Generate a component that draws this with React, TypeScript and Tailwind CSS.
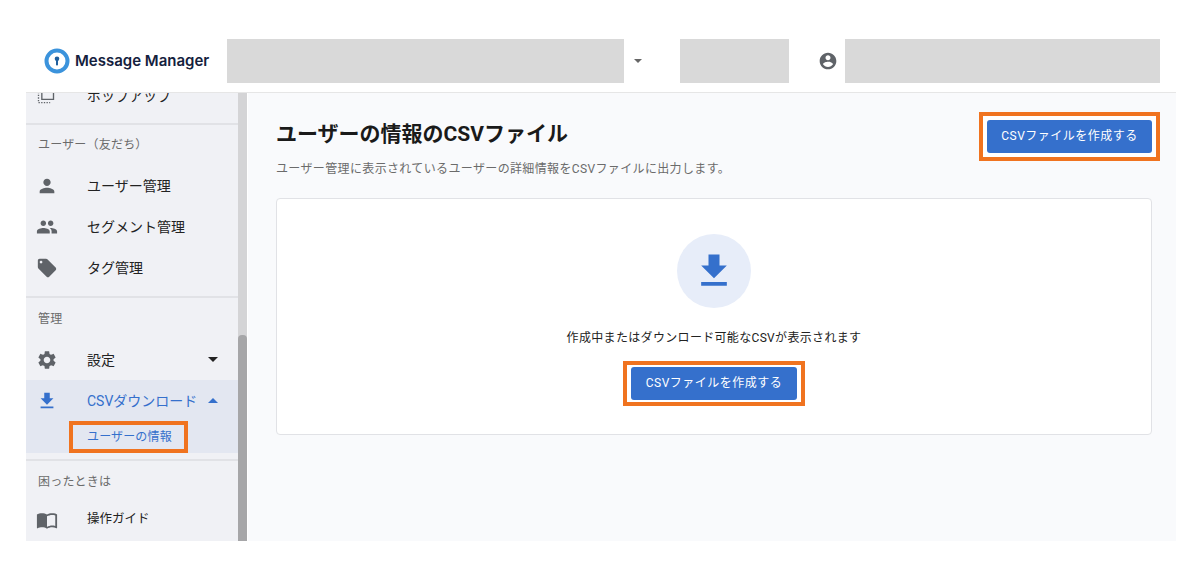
import React from "react";

const FONT = { fontFamily: '"Roboto", "Noto Sans CJK JP", sans-serif' };

const P = {
  person: "M12 12c2.21 0 4-1.79 4-4s-1.79-4-4-4-4 1.79-4 4 1.79 4 4 4zm0 2c-2.67 0-8 1.34-8 4v2h16v-2c0-2.66-5.33-4-8-4z",
  people: "M16 11c1.66 0 2.99-1.34 2.99-3S17.66 5 16 5c-1.66 0-3 1.34-3 3s1.34 3 3 3zm-8 0c1.66 0 2.99-1.34 2.99-3S9.66 5 8 5C6.34 5 5 6.34 5 8s1.34 3 3 3zm0 2c-2.33 0-7 1.17-7 3.5V19h14v-2.5c0-2.33-4.67-3.5-7-3.5zm8 0c-.29 0-.62.02-.97.05 1.16.84 1.97 1.97 1.97 3.45V19h6v-2.5c0-2.33-4.67-3.5-7-3.5z",
  tag: "M21.41 11.58l-9-9C12.05 2.22 11.55 2 11 2H4c-1.1 0-2 .9-2 2v7c0 .55.22 1.05.59 1.42l9 9c.36.36.86.58 1.41.58.55 0 1.05-.22 1.41-.59l7-7c.37-.36.59-.86.59-1.41 0-.55-.23-1.06-.59-1.42zM5.5 7C4.67 7 4 6.33 4 5.5S4.67 4 5.5 4 7 4.67 7 5.5 6.33 7 5.5 7z",
  gear: "M19.14 12.94c.04-.3.06-.61.06-.94 0-.32-.02-.64-.07-.94l2.03-1.58c.18-.14.23-.41.12-.61l-1.92-3.32c-.12-.22-.37-.29-.59-.22l-2.39.96c-.5-.38-1.03-.7-1.62-.94l-.36-2.54c-.04-.24-.24-.41-.48-.41h-3.84c-.24 0-.43.17-.47.41l-.36 2.54c-.59.24-1.13.57-1.62.94l-2.39-.96c-.22-.08-.47 0-.59.22L2.74 8.87c-.12.21-.08.47.12.61l2.03 1.58c-.05.3-.09.63-.09.94s.02.64.07.94l-2.03 1.58c-.18.14-.23.41-.12.61l1.92 3.32c.12.22.37.29.59.22l2.39-.96c.5.38 1.03.7 1.62.94l.36 2.54c.05.24.24.41.48.41h3.84c.24 0 .44-.17.47-.41l.36-2.54c.59-.24 1.13-.56 1.62-.94l2.39.96c.22.08.47 0 .59-.22l1.92-3.32c.12-.22.07-.47-.12-.61l-2.01-1.58zM12 15.6c-1.98 0-3.6-1.62-3.6-3.6s1.62-3.6 3.6-3.6 3.6 1.62 3.6 3.6-1.62 3.6-3.6 3.6z",
  download: "M19 9h-4V3H9v6H5l7 7 7-7zM5 18v2h14v-2H5z",
  account: "M12 2C6.48 2 2 6.48 2 12s4.48 10 10 10 10-4.48 10-10S17.52 2 12 2zm0 3c1.66 0 3 1.34 3 3s-1.34 3-3 3-3-1.34-3-3 1.34-3 3-3zm0 14.2c-2.5 0-4.71-1.28-6-3.22.03-1.99 4-3.08 6-3.08 1.99 0 5.97 1.09 6 3.08-1.29 1.94-3.5 3.22-6 3.22z",
  book: "M21 5c-1.11-.35-2.33-.5-3.5-.5-1.95 0-4.05.4-5.5 1.5-1.45-1.1-3.55-1.5-5.5-1.5S2.45 4.9 1 6v14.65c0 .25.25.5.5.5.1 0 .15-.05.25-.05C3.1 20.45 5.05 20 6.5 20c1.95 0 4.05.4 5.5 1.5 1.35-.85 3.8-1.5 5.5-1.5 1.65 0 3.35.3 4.75 1.05.1.05.15.05.25.05.25 0 .5-.25.5-.5V6c-.6-.45-1.25-.75-2-1zm0 13.5c-1.1-.35-2.3-.5-3.5-.5-1.7 0-4.15.65-5.5 1.5V8c1.35-.85 3.8-1.5 5.5-1.5 1.2 0 2.4.15 3.5.5v11.5z",
};

function Ico({ d, className }: { d: string; className: string }) {
  return (
    <svg viewBox="0 0 24 24" className={className} fill="currentColor">
      <path d={d} />
    </svg>
  );
}

function Caret({ up, className }: { up?: boolean; className: string }) {
  return (
    <svg viewBox="0 0 10 5" className={className} fill="currentColor">
      <path d={up ? "M0 5L5 0l5 5z" : "M0 0l5 5 5-5z"} />
    </svg>
  );
}

function Row({ icon, label, color = "text-[#222]", iconColor = "text-[#5f6368]", right, textClass = "text-[14px]", className = "" }: { icon: React.ReactNode; label: string; color?: string; iconColor?: string; right?: React.ReactNode; textClass?: string; className?: string }) {
  return (
    <div className={`flex h-[41px] items-center ${color} ${className}`}>
      <div className={`flex w-[61px] shrink-0 items-center pl-[10px] ${iconColor}`}>{icon}</div>
      <span className={`${textClass} leading-none`}>{label}</span>
      {right}
    </div>
  );
}

function Label({ text, className }: { text: string; className: string }) {
  return <div className={`flex h-[38px] items-center pl-[12px] text-[12px] leading-none tracking-[0.2px] text-[#6b6b6b] ${className}`}>{text}</div>;
}

function Divider({ className }: { className: string }) {
  return <div className={`h-[2px] bg-[#e1e2e6] ${className}`} />;
}

function CsvButton({ className }: { className: string }) {
  return (
    <div className={`h-[33px] rounded-[3px] bg-[#3570cc] text-center text-[12px] leading-[33px] tracking-[0.5px] text-white ${className}`}>
      CSVファイルを作成する
    </div>
  );
}

function Blurred({ className }: { className: string }) {
  return <div className={`h-[44px] bg-[#d9d9d9] blur-[0.6px] ${className}`} />;
}

export default function App() {
  return (
    <div className="h-[580px] w-[1202px] overflow-hidden bg-white px-[26px]" style={FONT}>
      <div className="flex h-[541px] w-[1150px] flex-col">
        <header className="flex h-[93px] shrink-0 items-end border-b border-[#e6e6e6] pb-[9px]">
          <div className="flex h-[44px] w-[201px] shrink-0 items-center pl-[18px]">
            <svg viewBox="0 0 26 26" className="h-[26px] w-[26px] shrink-0">
              <circle cx="13" cy="13" r="10.5" fill="#fff" stroke="#3b93dc" strokeWidth="4" />
              <circle cx="13" cy="10.8" r="2.3" fill="#1f5f9e" />
              <rect x="12" y="11" width="2" height="6.5" rx="0.8" fill="#1f5f9e" />
            </svg>
            <span className="ml-[5px] whitespace-nowrap text-[15px] font-semibold text-[#14213d]" style={{ fontFamily: '"Inter", sans-serif' }}>Message Manager</span>
          </div>
          <Blurred className="w-[397px] shrink-0" />
          <div className="flex h-[44px] w-[56px] shrink-0 items-center pl-[10px] text-[#666]">
            <Caret className="h-[4px] w-[8px]" />
          </div>
          <Blurred className="w-[109px] shrink-0" />
          <div className="flex h-[44px] w-[56px] shrink-0 items-center pl-[29px] text-[#5f6368]">
            <Ico d={P.account} className="h-[20px] w-[20px]" />
          </div>
          <Blurred className="w-[315px] shrink-0" />
        </header>
        <div className="flex min-h-0 flex-1">
          <aside className="w-[212px] shrink-0 overflow-hidden bg-[#f0f1f5]">
            <div className="-mt-[18px]">
              <Row
                label="ポップアップ"
                icon={
                  <svg viewBox="0 0 24 24" className="h-[20px] w-[20px]" fill="none" stroke="currentColor" strokeWidth="1.6">
                    <path d="M3 4v16h14" strokeDasharray="1.6 1.6" />
                    <path d="M7 4v12h14V4z" />
                  </svg>
                }
              />
              <Divider className="mt-[7px]" />
              <Label className="mb-[2px] pt-[2px]" text="ユーザー（友だち）" />
              <Row label="ユーザー管理" icon={<Ico d={P.person} className="h-[22px] w-[22px]" />} />
              <Row label="セグメント管理" icon={<Ico d={P.people} className="h-[22px] w-[22px]" />} />
              <Row label="タグ管理" icon={<Ico d={P.tag} className="h-[22px] w-[22px]" />} />
              <Divider className="mt-[8px]" />
              <Label className="mb-[3px] pt-[3px]" text="管理" />
              <Row
                label="設定"
                icon={<Ico d={P.gear} className="h-[22px] w-[22px]" />}
                right={<Caret className="ml-[93px] h-[5px] w-[10px] text-[#222]" />}
              />
              <div className="bg-[#e3e7f1]">
                <Row
                  label="CSVダウンロード"
                  color="text-[#3570cc]"
                  iconColor="text-[#3570cc]"
                  icon={<Ico d={P.download} className="h-[22px] w-[22px]" />}
                  right={<Caret up className="ml-[11px] h-[5px] w-[10px] text-[#3570cc]" />}
                />
                <div className="flex h-[32px] items-start pl-[43px]">
                  <div className="flex h-[32px] w-[119px] items-center border-[4px] border-[#f0731f] pl-[14px] text-[12px] leading-none tracking-[0.15px] text-[#3570cc]">
                    ユーザーの情報
                  </div>
                </div>
              </div>
              <Divider className="mt-[6px]" />
              <Label className="mb-[3px] pt-[4px]" text="困ったときは" />
              <Row className="-mt-[3px]" textClass="text-[12.5px]" label="操作ガイド" icon={<Ico d={P.book} className="h-[22px] w-[22px]" />} />
            </div>
          </aside>
          <div className="flex w-[9px] shrink-0 flex-col bg-[#d4d4d6] pt-[242px]">
            <div className="flex-1 rounded-t-[4px] bg-[#a6a6a8]" />
          </div>
          <div className="w-px shrink-0 bg-white" />
          <main className="min-w-0 flex-1 bg-[#f9fafc] pl-[28px] pr-[24px]">
            <div className="flex h-[105px] items-start justify-between pt-[19px]">
              <div className="pt-[9px]">
                <h1 className="text-[21px] font-bold leading-[26px] text-[#1a1a1a]">ユーザーの情報のCSVファイル</h1>
                <p className="mt-[14px] text-[12px] leading-[16px] tracking-[0.36px] text-[#6b6b6b]">ユーザー管理に表示されているユーザーの詳細情報をCSVファイルに出力します。</p>
              </div>
              <div className="-mr-[8px] border-[4px] border-[#f0731f] bg-white px-[4px] py-[4px]">
                <CsvButton className="w-[165px]" />
              </div>
            </div>
            <section className="flex h-[237px] flex-col items-center rounded-[4px] border border-[#e1e2e6] bg-white pt-[35px]">
              <div className="flex h-[74px] w-[74px] items-center justify-center rounded-full bg-[#e7edf9] text-[#3570cc]">
                <Ico d={P.download} className="h-[44px] w-[44px]" />
              </div>
              <p className="mt-[22px] text-[12px] leading-[16px] tracking-[0.33px] text-[#222]">作成中またはダウンロード可能なCSVが表示されます</p>
              <div className="mt-[15px] border-[4px] border-[#f0731f] bg-white px-[4px] py-[2px]">
                <CsvButton className="w-[166px]" />
              </div>
            </section>
          </main>
        </div>
      </div>
    </div>
  );
}
